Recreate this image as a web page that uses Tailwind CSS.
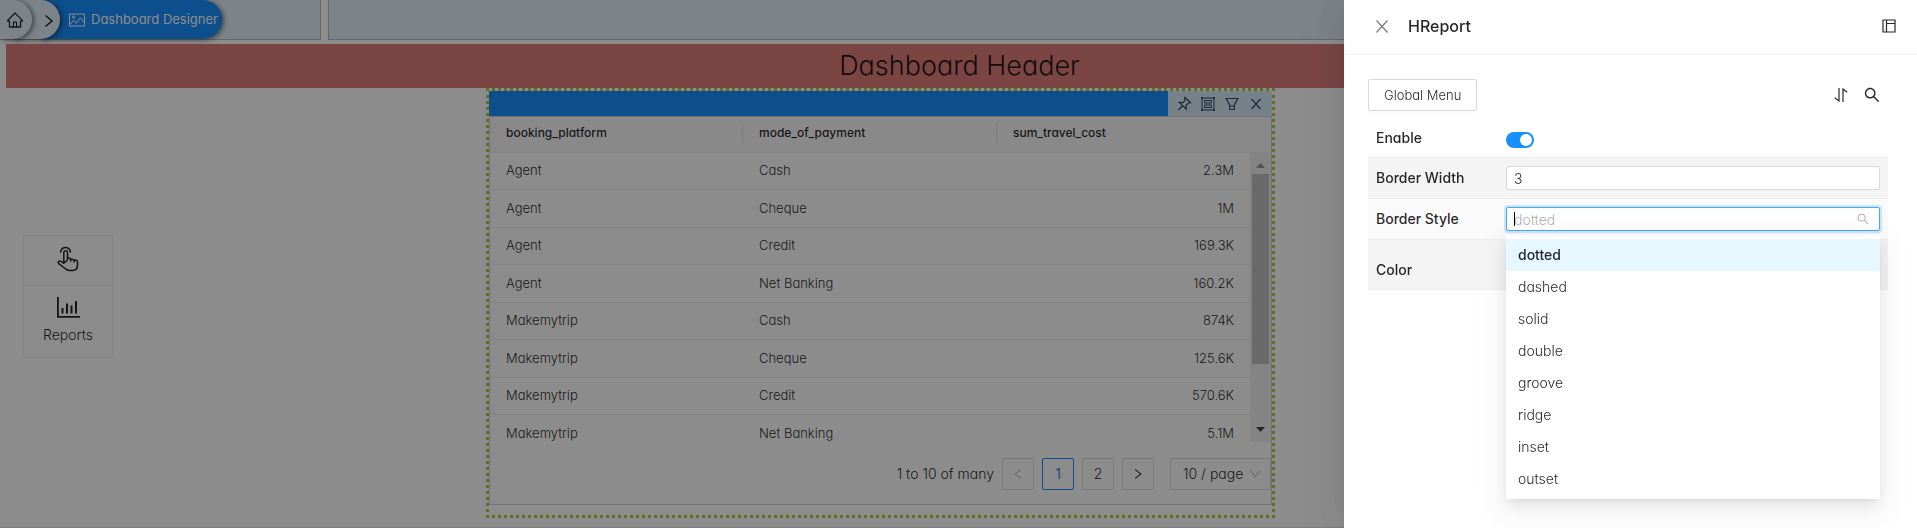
<!DOCTYPE html>
<html lang="en">
<head>
  <meta charset="UTF-8">
  <title>Dashboard Designer</title>
  <script src="https://cdn.jsdelivr.net/npm/@tailwindcss/browser@4"></script>
</head>
<body class="bg-white font-['Inter','Liberation_Sans',sans-serif] font-light [font-feature-settings:'cv11'] text-sm text-black/85 overflow-hidden">

  <!-- Top bar -->
  <header class="flex gap-[7px] h-10">
    <nav class="flex w-[321px] bg-[#e2f1fc] border-r border-b border-[#b8bcc0]" aria-label="Breadcrumb">
      <a href="#" aria-label="Home" class="z-20 flex items-center w-8 pl-[7px] bg-[#e2f1fc] rounded-r-full shadow-[2px_1px_5px_rgba(0,0,0,0.5)]">
        <svg class="size-4 shrink-0" viewBox="64 64 896 896" fill="currentColor"><path d="M946.5 505L560.1 118.8l-25.9-25.9a31.5 31.5 0 00-44.4 0L77.5 505a63.9 63.9 0 00-18.8 46c.4 35.2 29.7 63.3 64.9 63.3h42.5V940h691.8V614.3h43.4c17.1 0 33.2-6.7 45.3-18.8a63.6 63.6 0 0018.7-45.3c0-17-6.7-33.1-18.8-45.2zM568 868H456V664h112v204zm217.9-325.7V868H632V640c0-22.1-17.9-40-40-40H432c-22.1 0-40 17.9-40 40v228H238.1V542.3h-96l370-369.7 23.1 23.1L882 542.3h-96.1z"/></svg>
      </a>
      <span class="z-10 flex items-center justify-end w-12 -ml-5 pr-[3px] bg-[#e2f1fc] rounded-r-full shadow-[2px_1px_5px_rgba(0,0,0,0.5)]">
        <svg class="size-4" viewBox="0 0 16 16" fill="none" stroke="currentColor" stroke-width="1.5"><path d="M4.500 3.500l6.500 5.500-6.500 5.500"/></svg>
      </span>
      <a href="#" class="flex items-center gap-1.5 w-[182px] -ml-5 pl-[29px] bg-[#1890ff] text-white text-[13px] font-normal whitespace-nowrap rounded-r-full shadow-[2px_1px_5px_rgba(0,0,0,0.5)]">
        <svg class="size-4 shrink-0" viewBox="0 0 16 16" fill="none" stroke="currentColor"><path d="M.5 2h15v12H.5z"/><circle cx="4.5" cy="5" r="1.1"/><path d="M1 12.5l3.700-4.300 2.600 3 4.200-5.400 4 5"/></svg>
        Dashboard Designer
      </a>
    </nav>
    <div class="flex-1 bg-[#e2f1fc] border-l border-b border-[#b8bcc0]"></div>
  </header>

  <main class="border-b border-[#e2e2e2]">
    <h1 class="mt-1 ml-1.5 pr-1 h-11 bg-[#e07f7d] text-center text-[27px] leading-[43px]">Dashboard Header</h1>

    <div class="flex items-start pl-[23px] pb-[9px]">
      <!-- Side tools -->
      <aside class="mt-[147px] w-[90px] shrink-0 border border-[#eee]">
        <button type="button" aria-label="Interact" class="flex w-full h-[50px] items-center justify-center border-b border-[#eee]">
          <svg class="w-[22px] h-[26px] -translate-y-0.5" viewBox="0 0 22 26" fill="none" stroke="currentColor" stroke-width="1.500" stroke-linejoin="round" stroke-linecap="round"><path d="M3.500 6C4.200 3.100 6 1.500 8.500 1.500S12.800 3.100 13.500 6"/><path d="M6.800 16.500V6.700c0-2.600 3.700-2.600 3.700 0v5.800M10.500 14v-1.500c1.400-.9 3.300-.3 3.300 1.300V15v-1.300c1.400-.8 3.200-.3 3.200 1.300v1-1.500c1.400-.9 3.500-.3 3.500 1.400V19c0 3.700-2.300 5.500-5 5.500h-3c-2 0-3.200-.7-4.400-2L1.700 17.700c-1.300-1.800.7-3.500 2.500-2.200l2.600 1.800z"/></svg>
        </button>
        <button type="button" class="flex w-full h-[71px] flex-col items-center justify-start gap-1 pt-[11px]">
          <svg class="w-6 h-[22px]" viewBox="0 0 24 22" fill="currentColor"><path d="M1 0h1.800v19H24v1.800H1zM5.500 11h2v5.500h-2zM10 6.500h2v10h-2zM14.500 8.500h2v8h-2zM19 4h2v12.500h-2z"/></svg>
          <span class="leading-6">Reports</span>
        </button>
      </aside>

      <!-- Report widget -->
      <section class="ml-[373px] w-[789px] shrink-0 pb-2.5 border-[3px] border-dotted border-[#b0c93d]">
        <div class="flex h-[25px]">
          <div class="flex-1 bg-[#1890ff]"></div>
          <div class="flex items-center gap-2 px-2 bg-[#d8ebfb] text-[#2f4c66]">
            <button type="button" aria-label="Pin"><svg class="size-4" viewBox="0 0 16 16" fill="none" stroke="currentColor" stroke-width="1.200"><path d="M9 1.500l5.500 5.300-2.700.7-1.800 2 .3 3.700-7-6.700 3.700.1 1.700-2zM6.500 10l-4.300 4"/></svg></button>
            <button type="button" aria-label="Layout"><svg class="size-4" viewBox="0 0 16 16" fill="none" stroke="currentColor"><path d="M2 2h12v12H2zM4.500 4.500h7v2.500h-7zM4.500 9h7v2.500h-7z"/><path d="M1 1h2v2H1zM13 1h2v2h-2zM1 13h2v2H1zM13 13h2v2h-2z" fill="currentColor" stroke="none"/></svg></button>
            <button type="button" aria-label="Filter"><svg class="size-4" viewBox="0 0 16 16" fill="none" stroke="currentColor" stroke-width="1.200"><path d="M2.200 2.500h11.600L10.300 9v4.500H5.700V9zM5.700 10h4.600"/></svg></button>
            <button type="button" aria-label="Close"><svg class="size-4" viewBox="0 0 16 16" fill="none" stroke="currentColor" stroke-width="1.200"><path d="M3.500 3l9 10M12.500 3l-9 10"/></svg></button>
          </div>
        </div>

        <div class="border border-[#d0d0d0]">
          <div class="relative h-[325px] overflow-hidden">
            <table class="w-full table-fixed text-[13px]">
              <colgroup><col class="w-[253px]"><col class="w-[254px]"><col></colgroup>
              <thead class="text-xs">
                <tr class="h-[35px] bg-[#fafafa] border-b border-[#eee] text-left">
                  <th class="p-0 font-medium"><div class="flex h-5 items-center pl-4 border-r border-[#e0e0e0] -translate-y-px">booking_platform</div></th>
                  <th class="p-0 font-medium"><div class="flex h-5 items-center pl-4 border-r border-[#e0e0e0] -translate-y-px">mode_of_payment</div></th>
                  <th class="p-0 font-medium"><div class="flex h-5 items-center pl-4 -translate-y-px">sum_travel_cost</div></th>
                </tr>
              </thead>
              <tbody class="[&>tr]:border-b [&>tr]:border-[#eee] [&>tr:nth-child(odd)]:h-[37px] [&>tr:nth-child(even)]:h-[38px] [&_td]:pl-4 [&_td:last-child]:pr-[37px] [&_td:last-child]:text-right">
                <tr><td>Agent</td><td>Cash</td><td>2.3M</td></tr>
                <tr><td>Agent</td><td>Cheque</td><td>1M</td></tr>
                <tr><td>Agent</td><td>Credit</td><td>169.3K</td></tr>
                <tr><td>Agent</td><td>Net Banking</td><td>160.2K</td></tr>
                <tr><td>Makemytrip</td><td>Cash</td><td>874K</td></tr>
                <tr><td>Makemytrip</td><td>Cheque</td><td>125.6K</td></tr>
                <tr><td>Makemytrip</td><td>Credit</td><td>570.6K</td></tr>
                <tr><td>Makemytrip</td><td>Net Banking</td><td>5.1M</td></tr>
              </tbody>
            </table>
            <!-- Covers the last row's bottom line and holds the scrollbar -->
            <div class="absolute right-0 top-9 bottom-0 w-[21px] flex flex-col items-center justify-between bg-[#f1f1f1]">
              <svg class="w-[9px] h-[5px] mt-2.5" viewBox="0 0 9 5" fill="#999"><path d="M0 5L4.500 0 9 5z"/></svg>
              <div class="mt-1.5 h-[190px] w-[17px] bg-[#c1c1c1]"></div>
              <div class="flex-1"></div>
              <svg class="w-[9px] h-[5px] mb-2.5" viewBox="0 0 9 5" fill="#444"><path d="M0 0l4.500 5L9 0z"/></svg>
            </div>
          </div>

          <div class="flex items-center justify-end gap-2 pt-4 pb-[14px]">
            <span>1 to 10 of many</span>
            <button type="button" aria-label="Previous page" class="flex size-8 items-center justify-center rounded-xs border border-[#d9d9d9] text-black/25">
              <svg class="size-3 rotate-180" viewBox="64 64 896 896" fill="currentColor"><path d="M765.700 486.800L314.900 134.700A7.970 7.970 0 00302 141v77.300c0 4.900 2.300 9.600 6.100 12.600l360 281.100-360 281.100c-3.900 3-6.100 7.700-6.100 12.600V883c0 6.700 7.700 10.400 12.900 6.300l450.800-352.100a31.960 31.960 0 000-50.400z"/></svg>
            </button>
            <button type="button" class="size-8 rounded-xs border border-[#1890ff] text-[#1890ff] font-normal">1</button>
            <button type="button" class="size-8 rounded-xs border border-[#d9d9d9]">2</button>
            <button type="button" aria-label="Next page" class="flex size-8 items-center justify-center rounded-xs border border-[#d9d9d9]">
              <svg class="size-3" viewBox="64 64 896 896" fill="currentColor"><path d="M765.700 486.800L314.900 134.700A7.970 7.970 0 00302 141v77.300c0 4.900 2.300 9.600 6.100 12.600l360 281.100-360 281.100c-3.900 3-6.100 7.700-6.100 12.600V883c0 6.700 7.700 10.400 12.900 6.300l450.800-352.100a31.960 31.960 0 000-50.400z"/></svg>
            </button>
            <div class="relative ml-2">
              <select aria-label="Page size" class="appearance-none w-[101px] h-8 pl-3 rounded-xs border border-[#d9d9d9]"><option>10 / page</option></select>
              <svg class="absolute right-2.5 top-2.5 size-3 text-black/25" viewBox="64 64 896 896" fill="currentColor"><path d="M884 256h-75c-5.100 0-9.900 2.500-12.900 6.600L512 654.200 227.900 262.600c-3-4.100-7.800-6.600-12.900-6.600h-75c-6.500 0-10.300 7.400-6.500 12.700l352.600 486.100c12.800 17.600 39 17.600 51.700 0l352.600-486.100c3.900-5.300.1-12.700-6.400-12.700z"/></svg>
            </div>
          </div>
        </div>
      </section>
    </div>
  </main>

  <div class="fixed inset-0 z-30 bg-black/45"></div>

  <!-- Settings drawer -->
  <div role="dialog" aria-labelledby="drawer-title" class="fixed inset-y-0 right-0 z-40 w-[573px] bg-white shadow-[-6px_0_16px_-8px_rgba(0,0,0,0.08),-9px_0_28px_0_rgba(0,0,0,0.05),-12px_0_48px_16px_rgba(0,0,0,0.03)]">
    <div class="flex items-center h-[55px] pl-8 pr-[21px] pb-0.5 border-b border-[#f0f0f0]">
      <button type="button" aria-label="Close" class="mr-5 text-black/50">
        <svg class="w-3 h-[13px]" viewBox="0 0 12 13" fill="none" stroke="currentColor" stroke-width="1.300"><path d="M.5.5l11 12M11.500.5l-11 12"/></svg>
      </button>
      <h2 id="drawer-title" class="flex-1 text-base font-medium">HReport</h2>
      <button type="button" aria-label="Layout">
        <svg class="size-[14px]" viewBox="0 0 14 14" fill="none" stroke="currentColor" stroke-width="1.200"><path d="M1 1h12v12H1zM4.500 1v12M4.500 4.500H13"/></svg>
      </button>
    </div>

    <div class="pt-6 pl-6 pr-[29px]">
      <div class="flex items-center">
        <button type="button" class="h-8 px-[15px] rounded-xs border border-[#d9d9d9] text-[13px] shadow-[0_2px_0_rgba(0,0,0,0.015)]">Global Menu</button>
        <button type="button" aria-label="Sort" class="ml-auto">
          <svg class="size-[14px]" viewBox="0 0 14 14" fill="none" stroke="currentColor" stroke-width="1.200"><path d="M5 0v13L.8 9.800M9 14V1l4.200 3.200"/></svg>
        </button>
        <button type="button" aria-label="Search" class="mx-4 mr-2">
          <svg class="size-4" viewBox="64 64 896 896" fill="currentColor"><path d="M909.600 854.500L649.900 594.800C690.200 542.700 712 479 712 412c0-80.200-31.300-155.400-87.900-212.100-56.600-56.700-132-87.900-212.100-87.900s-155.500 31.300-212.100 87.900C143.200 256.500 112 331.800 112 412c0 80.100 31.300 155.500 87.900 212.100C256.500 680.800 331.800 712 412 712c67 0 130.600-21.800 182.700-62l259.700 259.600a8.200 8.200 0 0011.600 0l43.600-43.500a8.200 8.200 0 000-11.600zM570.400 570.400C528 612.700 471.800 636 412 636s-116-23.300-158.400-65.600C211.300 528 188 471.800 188 412s23.300-116.100 65.600-158.400C296 211.300 352.200 188 412 188s116.100 23.200 158.400 65.600S636 352.200 636 412s-23.300 116.100-65.600 158.400z"/></svg>
        </button>
      </div>

      <form class="mt-[7px]">
        <div class="grid grid-cols-[130px_1fr] items-center h-[39px] px-2">
          <label for="enable" class="font-medium">Enable</label>
          <input id="enable" type="checkbox" role="switch" checked class="appearance-none w-7 h-4 rounded-full bg-[#1890ff] translate-y-0.5 before:block before:size-3 before:ml-[14px] before:mt-0.5 before:rounded-full before:bg-white">
        </div>
        <div class="grid grid-cols-[130px_1fr] items-center h-[41px] px-2 bg-[#f4f4f4] border-t border-[#eee]">
          <label for="border-width" class="font-medium">Border Width</label>
          <input id="border-width" type="text" value="3" class="h-6 px-[7px] bg-white rounded-xs border border-[#d9d9d9]">
        </div>
        <div class="relative grid grid-cols-[130px_1fr] items-center h-[41px] px-2 bg-[#fafafa] border-t border-[#eee]">
          <label for="border-style" class="font-medium">Border Style</label>
          <div class="relative">
            <input id="border-style" type="text" role="combobox" aria-expanded="true" aria-controls="style-list" placeholder="dotted" class="block w-full h-6 px-[7px] bg-white rounded-xs border border-[#40a9ff] shadow-[0_0_0_2px_rgba(24,144,255,0.2)] outline-none placeholder:text-black/35">
            <span class="absolute left-2 top-[5px] h-[14px] w-px bg-black"></span>
            <svg class="absolute right-[11px] top-1.5 size-3 text-black/30" viewBox="64 64 896 896" fill="currentColor"><path d="M909.600 854.500L649.900 594.800C690.200 542.700 712 479 712 412c0-80.200-31.300-155.400-87.900-212.100-56.600-56.700-132-87.900-212.100-87.900s-155.500 31.300-212.100 87.900C143.200 256.500 112 331.800 112 412c0 80.100 31.300 155.500 87.900 212.100C256.500 680.800 331.800 712 412 712c67 0 130.600-21.800 182.700-62l259.700 259.600a8.200 8.200 0 0011.600 0l43.600-43.500a8.200 8.200 0 000-11.600zM570.400 570.400C528 612.700 471.800 636 412 636s-116-23.300-158.400-65.600C211.300 528 188 471.800 188 412s23.300-116.100 65.600-158.400C296 211.300 352.200 188 412 188s116.100 23.200 158.400 65.600S636 352.200 636 412s-23.300 116.100-65.600 158.400z"/></svg>
            <ul id="style-list" role="listbox" class="absolute z-10 left-0 right-0 top-7 py-1 bg-white rounded-xs shadow-[0_3px_6px_-4px_rgba(0,0,0,0.12),0_6px_16px_0_rgba(0,0,0,0.08),0_9px_28px_8px_rgba(0,0,0,0.05)] [&>li]:px-3 [&>li]:leading-8">
              <li role="option" aria-selected="true" class="bg-[#e6f7ff] font-medium">dotted</li>
              <li role="option">dashed</li>
              <li role="option">solid</li>
              <li role="option">double</li>
              <li role="option">groove</li>
              <li role="option">ridge</li>
              <li role="option">inset</li>
              <li role="option">outset</li>
            </ul>
          </div>
        </div>
        <div class="grid grid-cols-[130px_1fr] items-center h-[51px] px-2 pt-2.5 bg-[#f4f4f4] border-y border-[#eee]">
          <label for="color" class="font-medium">Color</label>
          <input id="color" type="color" value="#b0c93d" class="w-10 h-5">
        </div>
      </form>
    </div>
  </div>
</body>
</html>
